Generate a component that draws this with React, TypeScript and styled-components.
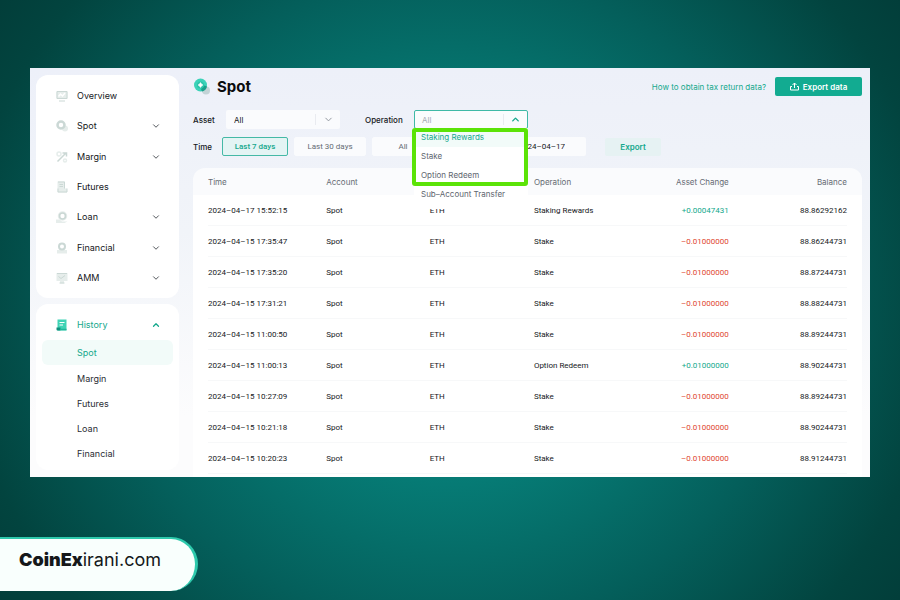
import React, { useState } from "react";
import styled, { createGlobalStyle } from "styled-components";
import { ChevronDown, ChevronUp } from "lucide-react";

const sans = `Inter, "Liberation Sans", sans-serif`;
const compact = `Roboto, "Liberation Sans", sans-serif`;
const green = "#14a88c";
const red = "#e0452f";

const GlobalStyle = createGlobalStyle`
  *, *::before, *::after { box-sizing: border-box; }
  body { margin: 0; font-family: ${sans}; color: #16181c; }
  button, input, select { font: inherit; color: inherit; margin: 0; }
  ul { list-style: none; margin: 0; padding: 0; }
`;

const Page = styled.div`
  min-height: 100vh;
  padding: 68px 0 9px;
  background: radial-gradient(ellipse 62% 88% at 50% 50%, #088a83 0%, #067b75 34%, #045f5b 62%, #02443f 88%, #023d39 100%);
`;

const Panel = styled.div`
  display: flex;
  gap: 14px;
  margin: 0 30px;
  padding: 7px 8px 0 6px;
  background: linear-gradient(#edf0f9 0%, #f1f4f9 40%, #fcfcfd 85%);
`;

const Sidebar = styled.nav`
  flex: none;
  width: 143px;
  display: flex;
  flex-direction: column;
  gap: 6px;
  padding-bottom: 7px;
`;

const MenuCard = styled.div`
  display: flex;
  flex-direction: column;
  background: #fff;
  border-radius: 12px;
`;

const MainMenu = styled(MenuCard)`
  min-height: 223px;
  padding: 6px 0 5px;
`;

const HistoryMenu = styled(MenuCard)`
  padding: 6px 6px 4px;
`;

const MenuButton = styled.button<{ $active?: boolean; $fill?: boolean }>`
  flex: ${(p) => (p.$fill ? "1" : "none")};
  min-height: 30px;
  display: flex;
  align-items: center;
  gap: 9px;
  padding: ${(p) => (p.$fill ? "0 18px 0 20px" : "0 12px 0 14px")};
  border: 0;
  background: none;
  text-align: left;
  font-size: 9px;
  line-height: 12px;
  color: ${(p) => (p.$active ? green : "#16181c")};
  cursor: pointer;
`;

const MenuText = styled.span`
  flex: 1;
`;

const SubLink = styled.a<{ $active?: boolean }>`
  display: flex;
  align-items: center;
  height: 25px;
  margin-bottom: ${(p) => (p.$active ? "1px" : "0")};
  padding-left: 35px;
  border-radius: 6px;
  font-size: 9px;
  text-decoration: none;
  color: ${(p) => (p.$active ? green : "#2b2e34")};
  background: ${(p) => (p.$active ? "#f2fbf9" : "transparent")};
`;

const Main = styled.main`
  flex: 1;
  min-width: 0;
  display: flex;
  flex-direction: column;
  padding-top: 2px;
  font-size: 8px;
`;

const Header = styled.header`
  display: flex;
  align-items: center;
  height: 19px;
  margin-bottom: 14px;
`;

const Title = styled.h1`
  flex: 1;
  margin: 0 0 0 6px;
  font-size: 15px;
  line-height: 19px;
  font-weight: 700;
  color: #0b0c0e;
`;

const HelpLink = styled.a`
  margin-right: 9px;
  color: ${green};
  text-decoration: none;
`;

const PrimaryButton = styled.button`
  display: flex;
  align-items: center;
  justify-content: center;
  gap: 4px;
  width: 87px;
  height: 19px;
  padding: 0;
  border: 0;
  border-radius: 2px;
  background: #12ab91;
  color: #fff;
  font-weight: 600;
  cursor: pointer;
`;

const FilterRow = styled.div`
  display: flex;
  align-items: center;
  height: 19px;
  margin-bottom: 8px;

  & + & { margin-bottom: 12px; }
`;

const Label = styled.label<{ $width: number; $gap?: number }>`
  width: ${(p) => p.$width}px;
  margin-left: ${(p) => p.$gap ?? 0}px;
  font-weight: 500;
`;

const Field = styled.div`
  position: relative;
  width: 114px;
  height: 19px;
`;

const SelectBox = styled.div`
  display: grid;
  grid-template-columns: 1fr 25px;
  align-items: center;
  height: 100%;
  border-radius: 2px;
  background: #fafbfd;
`;

const Select = styled.select`
  grid-area: 1 / 1 / 2 / 3;
  height: 100%;
  padding: 0 8px;
  border: 0;
  background: none;
  appearance: none;
`;

const ChevronCell = styled.span`
  grid-area: 1 / 2 / 2 / 3;
  display: flex;
  justify-content: center;
  height: 11px;
  align-items: center;
  border-left: 1px solid #e9ebf0;
  pointer-events: none;
`;

const Combo = styled.button`
  display: grid;
  grid-template-columns: 1fr 24px;
  align-items: center;
  width: 100%;
  height: 100%;
  padding: 0 0 0 7px;
  border: 1px solid #3fb9a6;
  border-radius: 2px;
  background: #fafcfd;
  color: #a6abb3;
  text-align: left;
`;

const Dropdown = styled.ul`
  position: absolute;
  z-index: 2;
  top: 18px;
  left: 0;
  right: 0;
  padding-bottom: 5px;
  background: #fff;
`;

const Option = styled.li<{ $selected: boolean }>`
  height: 19px;
  padding-left: 7px;
  line-height: 19px;
  color: ${(p) => (p.$selected ? green : "#60656e")};
  background: ${(p) => (p.$selected ? "#f2fbf9" : "#fff")};
  white-space: nowrap;
  cursor: pointer;
`;

const Highlight = styled.div`
  position: absolute;
  z-index: 3;
  top: 18px;
  left: -2px;
  right: 0;
  height: 58px;
  border: 4px solid #5be307;
  border-radius: 3px;
  pointer-events: none;
`;

const RangeButton = styled.button<{ $width: number; $active?: boolean }>`
  width: ${(p) => p.$width}px;
  height: 19px;
  margin-right: 6px;
  padding: 0;
  border: 1px solid ${(p) => (p.$active ? "#45b9a6" : "#fafbfd")};
  border-radius: 2px;
  background: ${(p) => (p.$active ? "#e4f4f4" : "#fafbfd")};
  color: ${(p) => (p.$active ? green : "#666b74")};
  font-family: ${compact};
  font-weight: ${(p) => (p.$active ? 500 : 400)};
  cursor: pointer;
`;

const DateInput = styled.input`
  width: 140px;
  height: 19px;
  margin: 0 19px 0 6px;
  padding: 0 21px 0 8px;
  border: 0;
  border-radius: 2px;
  background: #fafbfd;
  font-family: ${compact};
  text-align: right;
`;

const ExportButton = styled.button`
  width: 56px;
  height: 18px;
  padding: 0;
  border: 0;
  border-radius: 2px;
  background: #e6f2f3;
  color: ${green};
  font-weight: 600;
`;

const TableCard = styled.section`
  flex: 1;
  padding: 0 15px;
  border-radius: 12px 12px 0 0;
  background: linear-gradient(#fafbfd 27px, #fff 27px);
`;

const Table = styled.table`
  width: 100%;
  table-layout: fixed;
  border-collapse: separate;
  border-spacing: 0;

  th, td { padding: 0; text-align: left; white-space: nowrap; }
  th { height: 27px; font-weight: 400; color: #666b74; }
  td { height: 31px; border-bottom: 1px solid #f7f8f9; font-family: ${compact}; }
`;

const Col = styled.col<{ $share: number }>`
  width: ${(p) => p.$share}%;
`;

const NumHead = styled.th`
  && { text-align: right; }
`;

const Num = styled.td<{ $tone?: string }>`
  && { text-align: right; color: ${(p) => p.$tone ?? "inherit"}; }
`;

const Brand = styled.footer`
  display: inline-block;
  margin-top: 60px;
  height: 54px;
  padding: 9px 34px 0 19px;
  border-top: 2px solid #2ec9ac;
  border-right: 3px solid #2ec9ac;
  border-radius: 0 27px 27px 0;
  background: #f9fffd;
  font-size: 18px;
  line-height: 24px;
  color: #15181a;
`;

const BrandStrong = styled.strong`
  font-weight: 900;
`;

const SideIcon = ({ name }: { name: string }) => {
  const soft = "#e6edeb";
  const deep = "#cbd8d5";
  return (
    <svg width="12" height="12" viewBox="0 0 24 24" fill="none" aria-hidden="true">
      {name === "Overview" && (
        <>
          <rect x="1" y="2" width="22" height="16" rx="2" fill={soft} />
          <path d="M5 13l4-5 4 4 5-6" stroke="#fff" strokeWidth="3" />
          <path d="M6 22h12M2 3h20M2 3v14h20V3" stroke={deep} strokeWidth="2" />
        </>
      )}
      {name === "Spot" && (
        <>
          <circle cx="18" cy="17" r="6" fill={soft} />
          <circle cx="10" cy="10" r="7" stroke={deep} strokeWidth="5" />
        </>
      )}
      {name === "Margin" && (
        <>
          <circle cx="6" cy="6" r="4" stroke={soft} strokeWidth="3" />
          <circle cx="18" cy="19" r="3" stroke={soft} strokeWidth="3" />
          <path d="M3 21L20 4M13 4h8v7" stroke={deep} strokeWidth="3" />
        </>
      )}
      {name === "Futures" && (
        <>
          <path d="M3 1h15v14h4v8H3z" fill={soft} />
          <path d="M4 2h13v13M7 7h7M7 11h7M4 15v7h18v-7" stroke={deep} strokeWidth="2" />
        </>
      )}
      {name === "Loan" && (
        <>
          <path d="M0 17h7l5 4h11l-6 3H0z" fill={soft} />
          <circle cx="13" cy="10" r="7" stroke={soft} strokeWidth="5" />
          <circle cx="13" cy="10" r="6" stroke={deep} strokeWidth="3" />
        </>
      )}
      {name === "Financial" && (
        <>
          <path d="M2 16h20v7H2z" fill={soft} />
          <circle cx="12" cy="9" r="6" stroke={deep} strokeWidth="4" />
        </>
      )}
      {name === "AMM" && (
        <>
          <path d="M1 2h22v16H1zM8 18h8v5H8z" fill={soft} />
          <path d="M5 9l5 4 8-6M7 22h10M2 3h20" stroke={deep} strokeWidth="2" />
        </>
      )}
      {name === "History" && (
        <>
          <path d="M3 1h18v22H3z" fill="#3fd3b5" />
          <path d="M7 7h10M7 12h7" stroke="#fff" strokeWidth="2" />
          <path d="M1 17h8v6H3a2 2 0 0 1-2-2z" fill="#0f8f7c" />
          <path d="M9 21h12" stroke="#22b598" strokeWidth="3" />
        </>
      )}
    </svg>
  );
};

const SpotLogo = () => (
  <svg width="18" height="18" viewBox="0 0 36 36" aria-hidden="true">
    <circle cx="26" cy="25" r="8" fill="#c3d3d6" />
    <circle cx="15" cy="14" r="13" fill="#3bd2b8" />
    <path d="M28 17a13 13 0 0 1-10 10l-2-5 7-7z" fill="#1b9f8b" />
    <circle cx="15" cy="14" r="7" fill="#2cc4aa" />
    <path d="M15 9l2 3 3 2-3 2-2 3-2-3-3-2 3-2z" fill="#fff" stroke="#fff" strokeWidth="1" />
  </svg>
);

const UploadIcon = () => (
  <svg width="9" height="9" viewBox="0 0 18 18" fill="none" stroke="#fff" strokeWidth="2" aria-hidden="true">
    <path d="M4 9H1v7h16V9h-3M9 12V2M5 6l4-4 4 4" />
  </svg>
);

const menu = [
  { name: "Overview", nested: false },
  { name: "Spot", nested: true },
  { name: "Margin", nested: true },
  { name: "Futures", nested: false },
  { name: "Loan", nested: true },
  { name: "Financial", nested: true },
  { name: "AMM", nested: true },
];

const history = ["Spot", "Margin", "Futures", "Loan", "Financial"];
const operations = ["Staking Rewards", "Stake", "Option Redeem", "Sub–Account Transfer"];

const rows = [
  ["2024–04–17 15:52:15", "Staking Rewards", "+0.00047431", "88.86292162"],
  ["2024–04–15 17:35:47", "Stake", "–0.01000000", "88.86244731"],
  ["2024–04–15 17:35:20", "Stake", "–0.01000000", "88.87244731"],
  ["2024–04–15 17:31:21", "Stake", "–0.01000000", "88.88244731"],
  ["2024–04–15 11:00:50", "Stake", "–0.01000000", "88.89244731"],
  ["2024–04–15 11:00:13", "Option Redeem", "+0.01000000", "88.90244731"],
  ["2024–04–15 10:27:09", "Stake", "–0.01000000", "88.89244731"],
  ["2024–04–15 10:21:18", "Stake", "–0.01000000", "88.90244731"],
  ["2024–04–15 10:20:23", "Stake", "–0.01000000", "88.91244731"],
];

export default function App() {
  const [open, setOpen] = useState(true);
  const [range, setRange] = useState("Last 7 days");
  const ranges: [string, number][] = [["Last 7 days", 66], ["Last 30 days", 72], ["All", 62]];

  return (
    <Page>
      <GlobalStyle />
      <Panel>
        <Sidebar>
          <MainMenu>
            {menu.map((m) => (
              <MenuButton key={m.name} $fill>
                <SideIcon name={m.name} />
                <MenuText>{m.name}</MenuText>
                {m.nested && <ChevronDown size={10} strokeWidth={2} color="#33373d" />}
              </MenuButton>
            ))}
          </MainMenu>
          <HistoryMenu>
            <MenuButton $active aria-expanded="true">
              <SideIcon name="History" />
              <MenuText>History</MenuText>
              <ChevronUp size={10} strokeWidth={3} />
            </MenuButton>
            {history.map((h) => (
              <SubLink key={h} href="#" $active={h === "Spot"}>{h}</SubLink>
            ))}
          </HistoryMenu>
        </Sidebar>
        <Main>
          <Header>
            <SpotLogo />
            <Title>Spot</Title>
            <HelpLink href="#">How to obtain tax return data?</HelpLink>
            <PrimaryButton><UploadIcon />Export data</PrimaryButton>
          </Header>
          <FilterRow>
            <Label htmlFor="asset" $width={33}>Asset</Label>
            <Field>
              <SelectBox>
                <Select id="asset" defaultValue="All"><option>All</option></Select>
                <ChevronCell><ChevronDown size={11} strokeWidth={2} color="#8b9099" /></ChevronCell>
              </SelectBox>
            </Field>
            <Label htmlFor="operation" $width={49} $gap={25}>Operation</Label>
            <Field>
              <Combo id="operation" aria-haspopup="listbox" aria-expanded={open} onClick={() => setOpen(!open)}>
                All
                <ChevronCell><ChevronUp size={11} strokeWidth={3} color={green} /></ChevronCell>
              </Combo>
              {open && (
                <>
                  <Dropdown role="listbox" aria-label="Operation">
                    {operations.map((o, i) => (
                      <Option key={o} role="option" aria-selected={i === 0} $selected={i === 0}>{o}</Option>
                    ))}
                  </Dropdown>
                  <Highlight />
                </>
              )}
            </Field>
          </FilterRow>
          <FilterRow>
            <Label as="span" $width={29}>Time</Label>
            {ranges.map(([name, width]) => (
              <RangeButton key={name} $width={width} $active={range === name} onClick={() => setRange(name)}>{name}</RangeButton>
            ))}
            <DateInput aria-label="End date" defaultValue="2024–04–17" />
            <ExportButton>Export</ExportButton>
          </FilterRow>
          <TableCard>
            <Table>
              <colgroup>
                {[18.5, 16.2, 16.3, 15.5, 15, 18.5].map((s, i) => <Col key={i} $share={s} />)}
              </colgroup>
              <thead>
                <tr>
                  <th>Time</th><th>Account</th><th aria-label="Asset" /><th>Operation</th>
                  <NumHead>Asset Change</NumHead><NumHead>Balance</NumHead>
                </tr>
              </thead>
              <tbody>
                {rows.map(([time, op, change, balance]) => (
                  <tr key={time}>
                    <td>{time}</td><td>Spot</td><td>ETH</td><td>{op}</td>
                    <Num $tone={change[0] === "+" ? green : red}>{change}</Num>
                    <Num>{balance}</Num>
                  </tr>
                ))}
              </tbody>
            </Table>
          </TableCard>
        </Main>
      </Panel>
      <Brand><BrandStrong>CoinEx</BrandStrong>irani.com</Brand>
    </Page>
  );
}
